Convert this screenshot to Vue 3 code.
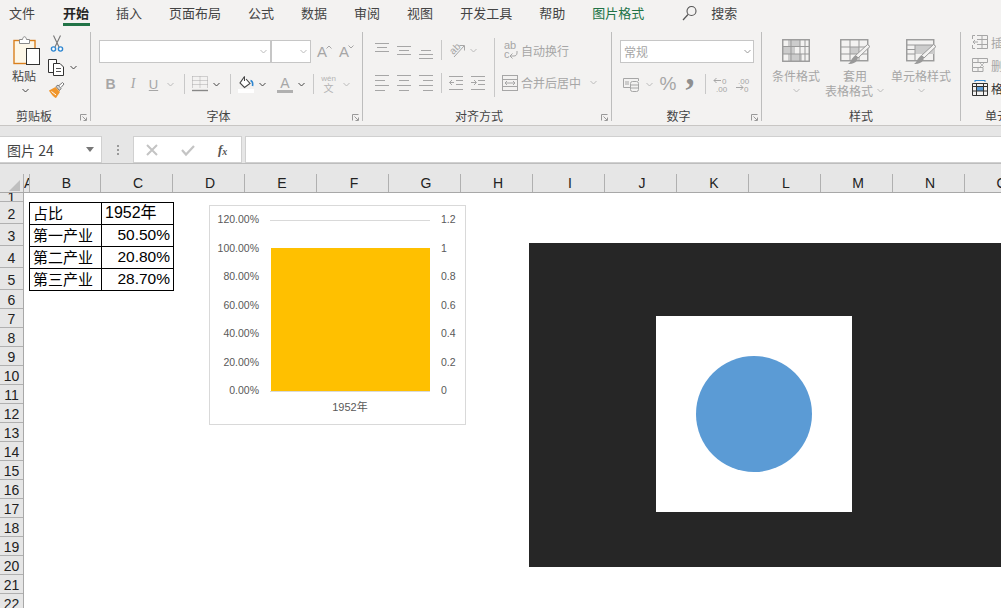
<script setup>
const tabs = ['文件', '开始', '插入', '页面布局', '公式', '数据', '审阅', '视图', '开发工具', '帮助', '图片格式']
const cols = [
  ['A', 'w6'], ['B', 'w71'], ['C', 'w72'], ['D', 'w72'], ['E', 'w72'], ['F', 'w72'], ['G', 'w72'], ['H', 'w72'],
  ['I', 'w72'], ['J', 'w72'], ['K', 'w72'], ['L', 'w72'], ['M', 'w72'], ['N', 'w72'], ['O', 'w72']
]
const rows = Array.from({ length: 22 }, (_, i) => i + 1)
const tableRows = [
  ['第一产业', '50.50%'],
  ['第二产业', '20.80%'],
  ['第三产业', '28.70%']
]
const leftAxis = ['120.00%', '100.00%', '80.00%', '60.00%', '40.00%', '20.00%', '0.00%']
const rightAxis = ['1.2', '1', '0.8', '0.6', '0.4', '0.2', '0']
</script>

<template>
  <div class="app">
    <nav class="tabs">
      <span v-for="t in tabs" :key="t" class="tab" :class="{ active: t === '开始', pic: t === '图片格式' }">{{ t }}</span>
      <span class="search">
        <svg width="15" height="16" viewBox="0 0 15 16"><circle cx="9.5" cy="6" r="4.5" fill="none" stroke="#555" stroke-width="1.1"/><path d="M6 9.5L1 15" stroke="#555" stroke-width="1.2"/></svg>
        <span class="search-text">搜索</span>
      </span>
    </nav>

    <section class="ribbon">
      <div class="group g-clip">
        <div class="clip">
          <div class="paste">
            <svg width="28" height="30" viewBox="0 0 28 30">
              <rect x="1" y="5.5" width="21" height="23" fill="#fdf7e8" stroke="#d9801f" stroke-width="1.4"/>
              <path d="M6.5 8.5V4.5H9.5C10 .8 13 .8 13.5 4.5H16.5V8.5Z" fill="#fff" stroke="#8a8a8a"/>
              <rect x="13.5" y="13.5" width="13" height="16" fill="#fff" stroke="#333"/>
            </svg>
            <span class="paste-label">粘贴</span>
            <svg class="chev-paste" width="7" height="5" viewBox="0 0 7 5"><path d="M.5 1l3 3 3-3" fill="none" stroke="#444"/></svg>
          </div>
          <div class="clip-tools">
            <svg class="cut" width="14" height="17" viewBox="0 0 14 17">
              <path d="M3.5 .5L9 12M10.5 .5L5 12" fill="none" stroke="#777" stroke-width="1.1"/>
              <circle cx="3.5" cy="14" r="2.1" fill="#fff" stroke="#2e86d0" stroke-width="1.4"/>
              <circle cx="10.5" cy="14" r="2.1" fill="#fff" stroke="#2e86d0" stroke-width="1.4"/>
            </svg>
            <div class="copy-row">
              <svg width="18" height="17" viewBox="0 0 18 17">
                <path d="M5.5 13.5H.5V.5H8.5V4" fill="#fff" stroke="#333"/>
                <path d="M5.5 4.5H12L15.5 8V16.5H5.5Z" fill="#fff" stroke="#333"/>
                <path d="M8 9.5H13M8 12.5H13" stroke="#555"/>
              </svg>
              <svg width="7" height="5" viewBox="0 0 7 5"><path d="M.5 1l3 3 3-3" fill="none" stroke="#444"/></svg>
            </div>
            <svg class="brush" width="17" height="17" viewBox="0 0 17 17">
              <path d="M1 8.5L7.5 5L12 10L8 16C6 15.5 2.5 11.5 1 8.5Z" fill="#f0962c"/>
              <path d="M3.5 9.5L8 13" stroke="#fff"/>
              <path d="M8 4.5L10 3L13 6.5L11.5 8.5Z" fill="#d9d9d9" stroke="#777"/>
              <path d="M11 3.5L14.5 .5L16 2L13 5.5" fill="#fff" stroke="#777"/>
            </svg>
          </div>
        </div>
        <div class="glabel lb-clip">剪贴板</div>
        <svg class="launcher" width="7" height="7" viewBox="0 0 7 7"><path d="M.5 6.5V.5H6.5M2.5 2.5L6 6M6.5 3.5V6.5H3.5" fill="none" stroke="#999"/></svg>
      </div>

      <div class="group g-font">
        <div class="font-inputs">
          <div class="combo c-font"><svg width="7" height="5" viewBox="0 0 7 5"><path d="M.5 1l3 3 3-3" fill="none" stroke="#bbb"/></svg></div>
          <div class="combo c-size"><svg width="7" height="5" viewBox="0 0 7 5"><path d="M.5 1l3 3 3-3" fill="none" stroke="#bbb"/></svg></div>
          <span class="grow-a a1">A<svg width="6" height="4" viewBox="0 0 6 4"><path d="M.5 3.5L3 1L5.5 3.5" fill="none" stroke="#a6a6a6"/></svg></span>
          <span class="grow-a a2">A<svg width="6" height="4" viewBox="0 0 6 4"><path d="M.5 .5L3 3L5.5 .5" fill="none" stroke="#a6a6a6"/></svg></span>
        </div>
        <div class="font-tools">
          <b class="cell fb">B</b>
          <i class="cell fi">I</i>
          <span class="cell fu">U</span>
          <span class="cell"><svg width="7" height="5" viewBox="0 0 7 5"><path d="M.5 1l3 3 3-3" fill="none" stroke="#bbb"/></svg></span>
          <span class="cell"><span class="vsep"></span></span>
          <span class="cell">
            <svg width="16" height="16" viewBox="0 0 16 16"><path d="M.5 .5H15.5V12M.5 .5V12M.5 4.5H15.5M.5 8.5H15.5M8 .5V12" fill="none" stroke="#aaa" stroke-dasharray="1 1"/><path d="M0 14.5H16" stroke="#888" stroke-width="1.4"/></svg>
          </span>
          <span class="cell"><svg width="7" height="5" viewBox="0 0 7 5"><path d="M.5 1l3 3 3-3" fill="none" stroke="#444"/></svg></span>
          <span class="cell"><span class="vsep"></span></span>
          <span class="cell">
            <svg width="16" height="17" viewBox="0 0 16 17"><path d="M6.5 .5L2 7L6.5 11.5L12 7.5L8 3" fill="#fff" stroke="#444" stroke-width="1.1"/><path d="M6.5 .5V5" stroke="#444"/><path d="M12.5 4.5C14.5 5 15 7 14.5 10" fill="none" stroke="#2e86d0" stroke-width="1.6"/><rect x="0" y="13" width="16" height="4" fill="#fff"/></svg>
          </span>
          <span class="cell"><svg width="7" height="5" viewBox="0 0 7 5"><path d="M.5 1l3 3 3-3" fill="none" stroke="#444"/></svg></span>
          <span class="cell fa"><span>A</span></span>
          <span class="cell"><svg width="7" height="5" viewBox="0 0 7 5"><path d="M.5 1l3 3 3-3" fill="none" stroke="#444"/></svg></span>
          <span class="cell"><span class="vsep"></span></span>
          <span class="cell wen"><small>wén</small><span>文</span></span>
          <span class="cell"><svg width="7" height="5" viewBox="0 0 7 5"><path d="M.5 1l3 3 3-3" fill="none" stroke="#bbb"/></svg></span>
        </div>
        <div class="glabel lb-launch">字体</div>
        <svg class="launcher" width="7" height="7" viewBox="0 0 7 7"><path d="M.5 6.5V.5H6.5M2.5 2.5L6 6M6.5 3.5V6.5H3.5" fill="none" stroke="#999"/></svg>
      </div>

      <div class="group g-align">
        <div class="align-body">
          <div class="align-left">
            <div class="align-row r1">
              <span class="cell"><svg width="14" height="20" viewBox="0 0 14 20"><path d="M0 3.5H14M2 7.5H12M0 11.5H14" stroke="#a6a6a6"/></svg></span>
              <span class="cell"><svg width="14" height="20" viewBox="0 0 14 20"><path d="M0 6.5H14M2 10.5H12M0 14.5H14" stroke="#a6a6a6"/></svg></span>
              <span class="cell"><svg width="14" height="20" viewBox="0 0 14 20"><path d="M2 10.5H12M0 14.5H14M0 18.5H14" stroke="#a6a6a6"/></svg></span>
              <span class="cell"><span class="vsep"></span></span>
              <span class="cell">
                <svg class="orient" width="16" height="16" viewBox="0 0 16 16"><text x="1" y="11" transform="rotate(-45 5 8)" class="svgt2">ab</text><path d="M5 15L15 4M10.5 3.5H15.5V8.5" fill="none" stroke="#a6a6a6"/></svg>
              </span>
              <span class="cell"><svg width="7" height="5" viewBox="0 0 7 5"><path d="M.5 1l3 3 3-3" fill="none" stroke="#bbb"/></svg></span>
            </div>
            <div class="align-row r2">
              <span class="cell"><svg width="14" height="16" viewBox="0 0 14 16"><path d="M0 .5H14M0 5.5H10M0 10.5H14M0 15.5H10" stroke="#a6a6a6"/></svg></span>
              <span class="cell"><svg width="14" height="16" viewBox="0 0 14 16"><path d="M0 .5H14M2 5.5H12M0 10.5H14M2 15.5H12" stroke="#a6a6a6"/></svg></span>
              <span class="cell"><svg width="14" height="16" viewBox="0 0 14 16"><path d="M0 .5H14M4 5.5H14M0 10.5H14M4 15.5H14" stroke="#a6a6a6"/></svg></span>
              <span class="cell"><span class="vsep"></span></span>
              <span class="cell"><svg width="14" height="14" viewBox="0 0 14 14"><path d="M0 .5H14M7 4.5H14M7 8.5H14M0 13.5H14M5 6.5H.5M3 4L.5 6.5L3 9" fill="none" stroke="#a6a6a6"/></svg></span>
              <span class="cell"><svg width="14" height="14" viewBox="0 0 14 14"><path d="M0 .5H14M7 4.5H14M7 8.5H14M0 13.5H14M0 6.5H5M3 4L5.5 6.5L3 9" fill="none" stroke="#a6a6a6"/></svg></span>
            </div>
          </div>
          <div class="align-sep"></div>
          <div class="align-right">
            <div class="wrap-row">
              <svg width="14" height="18" viewBox="0 0 14 18"><text x="0" y="8" class="svgt">ab</text><text x="0" y="17" class="svgt">c</text><path d="M13 10V12C13 14 11.5 15 10 15H6M8.5 12.5L6 15L8.5 17.5" fill="none" stroke="#a6a6a6"/></svg>
              <span class="dim-text">自动换行</span>
            </div>
            <div class="merge-row">
              <svg width="16" height="16" viewBox="0 0 16 16"><rect x=".5" y=".5" width="15" height="15" fill="none" stroke="#a6a6a6"/><path d="M.5 4.5H15.5M.5 11.5H15.5M3 8H13M5 6L3 8L5 10M11 6L13 8L11 10" fill="none" stroke="#a6a6a6"/></svg>
              <span class="dim-text">合并后居中</span>
              <svg class="merge-chev" width="7" height="5" viewBox="0 0 7 5"><path d="M.5 1l3 3 3-3" fill="none" stroke="#bbb"/></svg>
            </div>
          </div>
        </div>
        <div class="glabel lb-launch">对齐方式</div>
        <svg class="launcher" width="7" height="7" viewBox="0 0 7 7"><path d="M.5 6.5V.5H6.5M2.5 2.5L6 6M6.5 3.5V6.5H3.5" fill="none" stroke="#999"/></svg>
      </div>

      <div class="group g-num">
        <div class="combo c-num"><span class="num-text">常规</span><svg width="7" height="5" viewBox="0 0 7 5"><path d="M.5 1l3 3 3-3" fill="none" stroke="#999"/></svg></div>
        <div class="num-tools">
          <span class="cell"><svg width="17" height="15" viewBox="0 0 17 15"><path d="M.5 1.5H15.5V4M7 10.5H.5V1.5" fill="none" stroke="#a6a6a6"/><path d="M3 4V8M5 4V8" stroke="#a6a6a6"/><rect x="7.5" y="4.5" width="8" height="10" rx="2" fill="#f3f2f1" stroke="#a6a6a6"/><path d="M7.5 8H15.5M7.5 11H15.5" stroke="#a6a6a6"/></svg></span>
          <span class="cell"><svg width="7" height="5" viewBox="0 0 7 5"><path d="M.5 1l3 3 3-3" fill="none" stroke="#bbb"/></svg></span>
          <span class="cell pct">%</span>
          <span class="cell comma">,</span>
          <span class="cell"><span class="vsep"></span></span>
          <span class="cell"><svg width="16" height="16" viewBox="0 0 16 16"><text x="9" y="7.5" class="svgn">0</text><text x="3" y="15.5" class="svgn">.00</text><path d="M8 4.5H1M3.5 2L1 4.5L3.5 7" fill="none" stroke="#a6a6a6"/></svg></span>
          <span class="cell"><svg width="17" height="16" viewBox="0 0 17 16"><text x="3" y="7.5" class="svgn">.00</text><text x="9" y="15.5" class="svgn">0</text><path d="M1 11.5H8M5.5 9L8 11.5L5.5 14" fill="none" stroke="#a6a6a6"/></svg></span>
        </div>
        <div class="glabel lb-launch">数字</div>
        <svg class="launcher" width="7" height="7" viewBox="0 0 7 7"><path d="M.5 6.5V.5H6.5M2.5 2.5L6 6M6.5 3.5V6.5H3.5" fill="none" stroke="#999"/></svg>
      </div>

      <div class="group g-style">
        <div class="style-body">
          <div class="style-col sc1">
            <svg width="28" height="23" viewBox="0 0 28 23">
              <path d="M6 1H18V7H6ZM1 7H13V15H1ZM6 15H20V22H6Z" fill="#ccc"/>
              <rect x=".75" y=".75" width="26.5" height="21.5" fill="none" stroke="#999" stroke-width="1.4"/>
              <path d="M1 7.5H27M1 15H27M9 1V22M18 1V22M23 1V22" fill="none" stroke="#999"/>
            </svg>
            <span class="dim-text sl">条件格式</span>
            <svg class="style-chev" width="7" height="5" viewBox="0 0 7 5"><path d="M.5 1l3 3 3-3" fill="none" stroke="#bbb"/></svg>
          </div>
          <div class="style-col sc2">
            <svg width="31" height="27" viewBox="0 0 31 27">
              <path d="M10 8H19V15H10Z" fill="#ccc"/>
              <rect x=".75" y=".75" width="27" height="21" fill="#f3f2f1" stroke="#999" stroke-width="1.4"/>
              <path d="M10 8H19V15H10Z" fill="#ccc"/>
              <path d="M1 8H28M1 15H28M10 1V22M19 1V22" stroke="#999"/>
              <path d="M30 7.5L18 19L15.5 16.5L27.5 5.5Z" fill="#f3f2f1" stroke="#999"/>
              <path d="M15 16.5C18 16.5 18.5 19.5 17 21.5C15.5 24 11.5 25.5 8 25C11 23.5 11 19.5 15 16.5Z" fill="#999"/>
            </svg>
            <span class="dim-text sl">套用</span>
            <span class="dim-text sl sl2">表格格式<svg class="inline-chev" width="7" height="5" viewBox="0 0 7 5"><path d="M.5 1l3 3 3-3" fill="none" stroke="#bbb"/></svg></span>
          </div>
          <div class="style-col sc3">
            <svg width="31" height="27" viewBox="0 0 31 27">
              <rect x=".75" y=".75" width="27" height="21" fill="#f3f2f1" stroke="#999" stroke-width="1.4"/>
              <path d="M9 6H28V15H9Z" fill="#ccc"/>
              <path d="M1 6H28M1 15H9M1 10.5H9M9 6V22" stroke="#999"/>
              <path d="M30 7.5L18 19L15.5 16.5L27.5 5.5Z" fill="#f3f2f1" stroke="#999"/>
              <path d="M15 16.5C18 16.5 18.5 19.5 17 21.5C15.5 24 11.5 25.5 8 25C11 23.5 11 19.5 15 16.5Z" fill="#999"/>
            </svg>
            <span class="dim-text sl">单元格样式</span>
            <svg class="style-chev" width="7" height="5" viewBox="0 0 7 5"><path d="M.5 1l3 3 3-3" fill="none" stroke="#bbb"/></svg>
          </div>
        </div>
        <div class="glabel">样式</div>
      </div>

      <div class="group g-cells">
        <div class="cell-list">
          <div class="cell-row">
            <svg width="16" height="14" viewBox="0 0 16 14"><path d="M5 .5H15.5V13.5H5M.5 4V.5H3M.5 10V13.5H3M10 .5V13.5M5 4.5H15.5M5 9.5H15.5M6 7H1M3 5L1 7L3 9" fill="none" stroke="#a6a6a6"/></svg>
            <span class="dim-text">插入</span>
          </div>
          <div class="cell-row">
            <svg width="16" height="14" viewBox="0 0 16 14"><path d="M.5 .5H15.5V4.5H.5ZM.5 9.5H11V13.5H.5ZM.5 4.5V9.5M6 .5V4M6 10V13.5" fill="none" stroke="#a6a6a6"/><path d="M8 5L12 9M12 5L8 9" stroke="#bbb"/></svg>
            <span class="dim-text">删除</span>
          </div>
          <div class="cell-row">
            <svg width="16" height="16" viewBox="0 0 16 16"><rect x="4" y="6" width="8" height="5" fill="#5b9bd5"/><path d="M.5 3.5H15.5V15.5H.5ZM.5 6.5H15.5M.5 11H15.5M4.5 3.5V15.5M11.5 3.5V15.5" fill="none" stroke="#333"/><path d="M3 .5H13M3 0V2M13 0V2" fill="none" stroke="#2e86d0"/></svg>
            <span class="dark-text">格式</span>
          </div>
        </div>
        <div class="glabel lb-cells">单元格</div>
      </div>
    </section>

    <section class="formula">
      <div class="namebox"><span>图片 24</span><i class="caret"></i></div>
      <div class="dots"><i></i><i></i><i></i></div>
      <div class="fx-buttons">
        <svg width="14" height="14" viewBox="0 0 14 14"><path d="M2 2L12 12M12 2L2 12" stroke="#c4c4c4" stroke-width="2"/></svg>
        <svg width="14" height="14" viewBox="0 0 14 14"><path d="M1 7L5 11.5L13 3" fill="none" stroke="#c4c4c4" stroke-width="2.2"/></svg>
        <span class="fx">f<sub>x</sub></span>
      </div>
      <div class="finput"></div>
    </section>

    <section class="sheet">
      <div class="col-head">
        <div class="corner"><i></i></div>
        <div v-for="c in cols" :key="c[0]" class="col" :class="c[1]">{{ c[0] }}</div>
      </div>
      <div class="sheet-body">
        <div class="row-head">
          <div v-for="r in rows" :key="r" class="rh" :class="{ tiny: r === 1, tall: r >= 2 && r <= 5 }">{{ r }}</div>
        </div>
        <div class="canvas">
          <table class="data">
            <tbody>
              <tr>
                <td class="t-name first">占比</td>
                <td class="t-year">1952年</td>
              </tr>
              <tr v-for="r in tableRows" :key="r[0]">
                <td class="t-name">{{ r[0] }}</td>
                <td class="t-val">{{ r[1] }}</td>
              </tr>
            </tbody>
          </table>

          <div class="chart">
            <div class="plot-row">
              <div class="axis left"><span v-for="l in leftAxis" :key="l">{{ l }}</span></div>
              <div class="plot">
                <div class="gridline"></div>
                <div class="bar"></div>
              </div>
              <div class="axis right"><span v-for="l in rightAxis" :key="l">{{ l }}</span></div>
            </div>
            <div class="xlabel">1952年</div>
          </div>

          <div class="picture">
            <div class="pic-square"><div class="pic-circle"></div></div>
          </div>
        </div>
      </div>
    </section>
  </div>
</template>

<style>
html, body { margin: 0; overflow: hidden; background: #fff; }
</style>

<style scoped>
.app {
  width: 1001px;
  height: 608px;
  overflow: hidden;
  display: flex;
  flex-direction: column;
  font-family: "Noto Sans CJK SC", "Liberation Sans", sans-serif;
  background: #fff;
  color: #444;
}
.tabs {
  height: 26px;
  flex: none;
  display: flex;
  gap: 27px;
  padding-left: 9px;
  align-items: center;
  background: #f3f2f1;
  font-size: 13px;
  line-height: 26px;
}
.tab { position: relative; color: #444; white-space: nowrap; }
.tab:first-child { margin-right: 1px; }
.tab.active { font-weight: 700; color: #262626; }
.tab.active::after {
  content: "";
  position: absolute;
  left: 0;
  right: -1px;
  bottom: 0;
  height: 3px;
  background: #217346;
}
.tab.pic { color: #217346; }
.search { display: flex; align-items: center; margin-left: 11px; }
.search-text { margin-left: 14px; }

.ribbon {
  height: 100px;
  flex: none;
  box-sizing: border-box;
  padding: 6px 0 4px;
  display: flex;
  background: #f3f2f1;
  border-bottom: 1px solid #c8c6c4;
}
.group {
  position: relative;
  box-sizing: border-box;
  height: 89px;
  border-right: 1px solid #bdbdbd;
  flex: none;
}
.g-clip { width: 91px; }
.g-font { width: 272px; padding: 8px 0 0 8px; }
.g-align { width: 249px; padding: 6px 0 0 8px; }
.g-num { width: 150px; padding: 8px 0 0 8px; }
.g-style { width: 199px; padding: 7px 0 0 9px; }
.g-cells { flex: 1; border-right: 0; padding: 3px 0 0 11px; overflow: hidden; }
.glabel {
  position: absolute;
  left: 0;
  right: 0;
  bottom: -3px;
  height: 16px;
  line-height: 16px;
  font-size: 12px;
  text-align: center;
  color: #444;
}
.lb-launch { right: 16px; }
.lb-clip { right: 22px; }
.lb-cells { left: 24px; right: auto; white-space: nowrap; }
.launcher { position: absolute; right: 3px; bottom: 0; }
.cell { display: flex; align-items: center; justify-content: center; }
.vsep { display: block; width: 1px; height: 20px; background: #c8c8c8; }

.clip { display: flex; padding: 3px 0 0 13px; }
.paste { width: 28px; display: flex; flex-direction: column; align-items: flex-start; }
.paste-label { font-size: 12px; line-height: 15px; margin: 3px 0 0 -1px; width: 24px; color: #444; }
.chev-paste { margin: 5px 0 0 9px; }
.clip-tools { display: flex; flex-direction: column; margin-left: 7px; gap: 7px; align-items: flex-start; }
.cut { margin-left: 2px; }
.brush { margin-top: -1px; }
.copy-row { display: flex; align-items: center; gap: 4px; }

.font-inputs { display: flex; height: 23px; }
.combo {
  box-sizing: border-box;
  height: 23px;
  background: #fff;
  border: 1px solid #c6c6c6;
  display: flex;
  align-items: center;
  justify-content: flex-end;
  padding-right: 3px;
}
.c-font { width: 172px; }
.c-size { width: 40px; margin-left: 0; border-left-width: 1px; }
.grow-a { font-size: 15px; line-height: 23px; color: #a6a6a6; font-family: "Liberation Sans", sans-serif; display: flex; align-items: flex-start; width: 16px; flex: none; }
.grow-a svg { margin: 5px 0 0 -1px; flex: none; }
.a1 { margin-left: 6px; }
.a2 { margin-left: 6px; }
.font-tools {
  display: grid;
  grid-template-columns: 23px 22px 19px 15px 13px 18px 15px 13px 18px 15px 26px 10px 14px 17px 18px;
  height: 18px;
  margin-top: 11px;
}
.fb, .fi, .fu { font: 13px "Liberation Sans", sans-serif; color: #a6a6a6; }
.fb { font-weight: 700; font-size: 14px; }
.fi { font-style: italic; font-family: "Liberation Serif", serif; font-size: 14px; }
.fu { text-decoration: underline; }
.fa span { font: 14px/14px "Liberation Sans", sans-serif; color: #a6a6a6; width: 16px; text-align: center; border-bottom: 3px solid #b0b0b0; margin-left: 4px; }
.wen { flex-direction: column; color: #b4b4b4; font-size: 10px; line-height: 10px; }
.wen small { font: 8px/8px "Liberation Sans", sans-serif; }

.align-body { display: flex; height: 60px; }
.align-left { width: 119px; flex: none; }
.align-row { display: grid; }
.r1 { grid-template-columns: 22px 22px 22px 8px 24px 8px; height: 24px; }
.r2 { grid-template-columns: 22px 22px 22px 8px 22px 22px; height: 23px; margin-top: 9px; }
.orient { overflow: visible; }
.svgt { font: 11px "Liberation Sans", sans-serif; fill: #a6a6a6; }
.svgt2 { font: 10px "Liberation Sans", sans-serif; fill: #a6a6a6; }
.svgn { font: 8px "Liberation Sans", sans-serif; fill: #a6a6a6; }
.align-sep { width: 1px; height: 59px; background: #c8c8c8; margin-left: 4px; }
.align-right { padding-left: 7px; }
.wrap-row, .merge-row { display: flex; align-items: center; gap: 3px; }
.wrap-row { height: 24px; padding-left: 2px; }
.merge-row { height: 23px; margin-top: 9px; }
.merge-chev { margin-left: 6px; }
.dim-text { font-size: 12px; line-height: 15px; color: #a6a6a6; white-space: nowrap; }
.dark-text { font-size: 12px; line-height: 15px; color: #333; white-space: nowrap; }

.c-num { width: 134px; justify-content: space-between; padding: 0 2px 0 3px; }
.num-text { font-size: 12px; color: #a6a6a6; }
.num-tools {
  display: grid;
  grid-template-columns: 22px 14px 24px 20px 10px 21px 24px;
  height: 18px;
  margin-top: 11px;
}
.pct { font: 19px/18px "Liberation Sans", sans-serif; color: #a6a6a6; }
.comma { font: 700 36px/18px "Liberation Serif", serif; color: #8f8f8f; position: relative; top: -12px; }

.style-body { display: flex; gap: 3px; }
.style-col { display: flex; flex-direction: column; align-items: center; }
.sc1 { width: 50px; }
.sc2 { width: 62px; }
.sc3 { width: 64px; }
.sc1 > svg:first-child { margin-bottom: 6px; }
.sc2 > svg:first-child, .sc3 > svg:first-child { margin-bottom: 2px; }
.sl { text-align: center; }
.sl2 { position: relative; left: -6px; }
.inline-chev { position: absolute; left: 52px; top: 5px; }
.style-chev { margin-top: 5px; }

.cell-list { display: flex; flex-direction: column; gap: 9px; }
.cell-row { display: flex; align-items: center; gap: 3px; height: 14px; white-space: nowrap; }
.cell-row svg { flex: none; }

.formula {
  height: 38px;
  flex: none;
  box-sizing: border-box;
  padding-top: 10px;
  display: flex;
  background: #e6e6e6;
  border-bottom: 1px solid #bdbdbd;
}
.namebox {
  box-sizing: border-box;
  width: 102px;
  height: 27px;
  background: #fff;
  border: 1px solid #d0d0d0;
  border-left: 0;
  display: flex;
  align-items: center;
  justify-content: space-between;
  padding: 0 7px;
  font-size: 14px;
  color: #444;
}
.caret { width: 0; height: 0; border: 4px solid transparent; border-top: 5px solid #777; border-bottom: 0; }
.dots { width: 31px; display: flex; flex-direction: column; align-items: center; justify-content: center; gap: 2px; }
.dots i { width: 2px; height: 2px; background: #999; }
.fx-buttons {
  box-sizing: border-box;
  width: 109px;
  height: 27px;
  background: #fff;
  border: 1px solid #d0d0d0;
  display: flex;
  align-items: center;
  padding-left: 11px;
  gap: 22px;
}
.fx { font: italic 700 13px "Liberation Serif", serif; color: #555; margin-left: 1px; }
.fx sub { font-size: 10px; vertical-align: -1px; line-height: 0; }
.finput { flex: 1; height: 27px; box-sizing: border-box; margin-left: 3px; background: #fff; border: 1px solid #d0d0d0; border-right: 0; }

.sheet { flex: 1; min-height: 0; display: flex; flex-direction: column; }
.col-head {
  height: 29px;
  flex: none;
  box-sizing: border-box;
  display: flex;
  background: #e6e6e6;
  border-bottom: 1px solid #a8a8a8;
  padding-top: 10px;
  font: 14px/18px "Liberation Sans", sans-serif;
  color: #222;
}
.corner { width: 24px; flex: none; box-sizing: border-box; border-right: 1px solid #b0b0b0; position: relative; }
.corner i {
  position: absolute;
  right: 3px;
  bottom: 1px;
  width: 0;
  height: 0;
  border-style: solid;
  border-width: 0 0 11px 11px;
  border-color: transparent transparent #bfbfbf transparent;
}
.col { flex: none; box-sizing: border-box; border-right: 1px solid #b0b0b0; text-align: center; overflow: hidden; padding-left: 3px; }
.w6 { width: 6px; padding-left: 0; }
.w71 { width: 71px; }
.w72 { width: 72px; }
.sheet-body { flex: 1; min-height: 0; display: flex; overflow: hidden; }
.row-head { width: 24px; flex: none; box-sizing: border-box; background: #e6e6e6; border-right: 1px solid #a8a8a8; }
.rh {
  box-sizing: border-box;
  height: 19px;
  border-bottom: 1px solid #b0b0b0;
  font: 14px/21px "Liberation Sans", sans-serif;
  color: #222;
  text-align: center;
  overflow: hidden;
}
.rh.tall { height: 22px; line-height: 24px; }
.rh.tiny { height: 9px; line-height: 9px; }
.canvas { position: relative; flex: 1; min-width: 0; background: #fff; }

.data {
  border-collapse: collapse;
  margin: 9px 0 0 5px;
  table-layout: fixed;
  width: 145px;
  color: #000;
}
.data td {
  box-sizing: border-box;
  height: 22px;
  padding: 0 0 2px;
  border: 1px solid #000;
  font-size: 15px;
  line-height: 19px;
  white-space: nowrap;
}
.t-name { width: 72px; padding-left: 3px !important; }
.first { padding-left: 3px !important; }
.t-year { font-family: "Liberation Sans", "Noto Sans CJK SC", sans-serif; font-size: 16px !important; padding-left: 3px !important; }
.t-val { font-family: "Liberation Sans", sans-serif; font-size: 15.5px !important; text-align: right; padding-right: 3px !important; }

.chart {
  position: absolute;
  left: 185px;
  top: 12px;
  box-sizing: border-box;
  width: 257px;
  height: 220px;
  border: 1px solid #d9d9d9;
  background: #fff;
  font: 10.5px "Liberation Sans", "Noto Sans CJK SC", sans-serif;
  color: #595959;
}
.plot-row { display: flex; height: 171px; margin-top: 14px; align-items: flex-start; }
.axis { display: flex; flex-direction: column; justify-content: space-between; height: 171px; }
.axis span { display: block; height: 0; line-height: 0; white-space: nowrap; }
.axis.left { width: 49px; text-align: right; margin-top: -1px; }
.axis.right { margin-left: 11px; margin-top: -1px; }
.plot {
  width: 160px;
  margin-left: 11px;
  height: 172px;
  flex: none;
  box-sizing: border-box;
  border-bottom: 1px solid #d9d9d9;
  display: flex;
  flex-direction: column;
  justify-content: space-between;
}
.gridline { height: 1px; background: #d9d9d9; }
.bar { height: 143px; margin-left: 1px; background: #ffc000; }
.xlabel { text-align: center; margin: 9px 0 0 25px; line-height: 14px; font-size: 11px; }

.picture {
  position: absolute;
  left: 505px;
  top: 50px;
  right: 0;
  height: 324px;
  background: #262626;
}
.pic-square {
  position: absolute;
  left: 127px;
  top: 73px;
  width: 196px;
  height: 196px;
  background: #fff;
  display: flex;
  align-items: center;
  justify-content: center;
}
.pic-circle { width: 116px; height: 116px; border-radius: 50%; background: #5b9bd5; }
</style>
